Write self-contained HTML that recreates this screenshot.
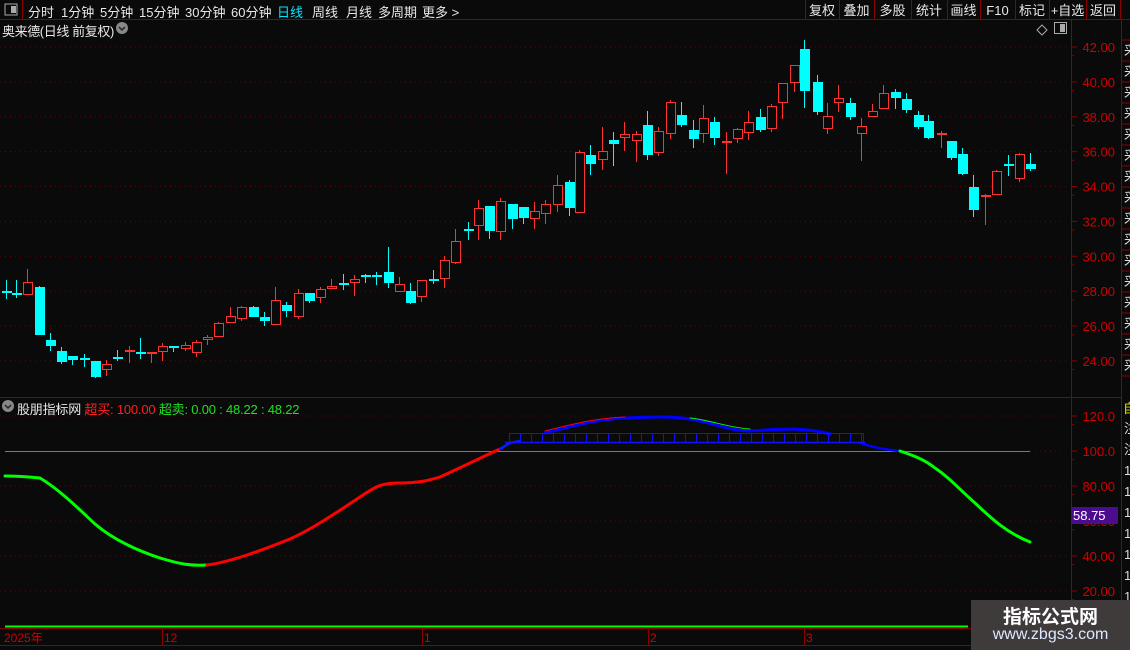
<!DOCTYPE html>
<html><head><meta charset="utf-8"><style>
html,body{margin:0;padding:0;background:#0a0a0a;width:1130px;height:650px;overflow:hidden}
body{font-family:"Liberation Sans","Noto Sans CJK SC",sans-serif;position:relative}
.t{position:absolute;white-space:nowrap;font-size:13px}
</style></head><body>
<svg id="s" width="1130" height="650" style="position:absolute;left:0;top:0" xmlns="http://www.w3.org/2000/svg" font-family="Liberation Sans, Noto Sans CJK SC, sans-serif"></svg>
<div class="t" style="left:28px;top:2px;color:#e8e8e8">分时</div>
<div class="t" style="left:61px;top:2px;color:#e8e8e8">1分钟</div>
<div class="t" style="left:100px;top:2px;color:#e8e8e8">5分钟</div>
<div class="t" style="left:139px;top:2px;color:#e8e8e8">15分钟</div>
<div class="t" style="left:185px;top:2px;color:#e8e8e8">30分钟</div>
<div class="t" style="left:231px;top:2px;color:#e8e8e8">60分钟</div>
<div class="t" style="left:277px;top:2px;color:#00e5ff">日线</div>
<div class="t" style="left:312px;top:2px;color:#e8e8e8">周线</div>
<div class="t" style="left:346px;top:2px;color:#e8e8e8">月线</div>
<div class="t" style="left:378px;top:2px;color:#e8e8e8">多周期</div>
<div class="t" style="left:422px;top:2px;color:#e8e8e8">更多 &gt;</div>
<div class="t" style="left:2px;top:21px;color:#e8e8e8;letter-spacing:-0.4px">奥来德(日线 前复权)</div>
<div class="t" style="left:17px;top:399px;color:#e8e8e8;letter-spacing:-0.2px">股朋指标网 <span style="color:#ff2020">超买: 100.00</span> <span style="color:#20e020">超卖: 0.00 : 48.22 : 48.22</span></div>
<div style="position:absolute;left:971px;top:600px;width:159px;height:50px;background:#3f3b3b"></div>
<div class="t" style="left:971px;top:602px;width:159px;text-align:center;color:#fff;font-size:19px;font-weight:bold">指标公式网</div>
<div class="t" style="left:971px;top:626px;width:159px;text-align:center;color:#dfe8ff;font-size:16px">www.zbgs3.com</div>
<script>
var s=document.getElementById('s'),h='';
function L(x1,y1,x2,y2,c,w,d){h+='<line x1="'+x1+'" y1="'+y1+'" x2="'+x2+'" y2="'+y2+'" stroke="'+c+'" stroke-width="'+(w||1)+'"'+(d?' stroke-dasharray="'+d+'"':'')+'/>';}
function R(x,y,w,hh,f,st){h+='<rect x="'+x+'" y="'+y+'" width="'+w+'" height="'+hh+'" fill="'+f+'"'+(st?' stroke="'+st+'"':'')+'/>';}
function T(x,y,t,c,sz,a){h+='<text x="'+x+'" y="'+y+'" fill="'+c+'" font-size="'+(sz||13)+'"'+(a?' text-anchor="'+a+'"':'')+'>'+t+'</text>';}
var D='#8b0000';
L(0,19.5,1130,19.5,D);L(22.5,0,22.5,19,D);
R(5,4,12,11,'none','#aaa');R(11,6,5,7,'#aaa');
var bx=[805,839,874,911,947,980,1015,1049,1086,1120],bt=['复权','叠加','多股','统计','画线','F10','标记','+自选','返回'];
for(var i=0;i<bx.length;i++)L(bx[i]+.5,0,bx[i]+.5,19,D);
for(i=0;i<9;i++)T((bx[i]+bx[i+1])/2,15,bt[i],'#e8e8e8',13,'middle');
h+='<circle cx="122" cy="28" r="6" fill="#888"/><path d="M119 27l3 3 3-3" stroke="#222" stroke-width="1.5" fill="none"/>';
h+='<circle cx="8" cy="406" r="6" fill="#888"/><path d="M5 405l3 3 3-3" stroke="#222" stroke-width="1.5" fill="none"/>';
h+='<path d="M1042 25l5 5-5 5-5-5z" stroke="#aaa" fill="none"/>';R(1054.5,22.5,12,11,'none','#aaa');R(1060,24,5,8,'#aaa');
L(1071.5,20,1071.5,650,D);L(1121.5,20,1121.5,650,D);
L(0,397.5,1121,397.5,D);L(0,628.5,1121,628.5,D);L(0,645.5,1121,645.5,D);
var pl=[42,40,38,36,34,32,30,28,26,24];
for(i=0;i<pl.length;i++){var y=47+(42-pl[i])*17.44;L(0,y,1068,y,'#6a0000',1,'1 4');L(1071,y,1077,y,D);L(1071,y+8.7,1074,y+8.7,D);T(1115,y+5,pl[i].toFixed(2),'#d00000',13,'end');}
var il=[120,100,80,60,40,20];
for(i=0;i<il.length;i++){var y=451+(100-il[i])*1.75;if(il[i]!=100)L(0,y,1068,y,'#6a0000',1,'1 4');else L(1030,y,1068,y,'#6a0000',1,'1 4');L(1071,y,1077,y,D);L(1071,y+8.7,1074,y+8.7,D);T(1115,y+5,il[i]<100?il[i].toFixed(2):il[i].toFixed(1),'#d00000',13,'end');}
for(i=0;i<17;i++){L(1122,40+i*21,1130,40+i*21,D);}
for(i=0;i<16;i++)T(1124,55+i*21,'采','#ddd',13);
T(1123,413,'自','#dd0',13);for(i=0;i<9;i++)T(1124,433+i*21,i<2?'注':'1','#ddd',13);
var C=[[5.5,291,293,280,299,'c'],[16,294,294,280,298,'c'],[27,282,295,269,295,'r'],[39,287,335,286,335,'c'],[50,340,346,333,351,'c'],[61,351,362,347,364,'c'],[72,356,360,356,365,'c'],[84,359,360,354,367,'c'],[95,361,377,361,378,'c'],[106,364,370,360,376,'r'],[117,358,358,350,361,'c'],[129,351,351,346,363,'r'],[140,353,353,338,359,'c'],[151,353,353,353,363,'r'],[162,346,352,343,361,'r'],[173,347,347,347,352,'c'],[185,345,349,342,351,'r'],[196,342,353,340,357,'r'],[207,337,340,335,345,'r'],[218,323,337,322,337,'r'],[230,316,323,307,323,'r'],[241,307,319,306,321,'r'],[253,307,317,306,317,'c'],[264,317,321,312,326,'c'],[275,300,325,287,325,'r'],[286,305,311,302,317,'c'],[298,293,317,289,319,'r'],[309,293,301,293,303,'c'],[320,289,298,287,303,'r'],[331,286,289,279,289,'r'],[343,284,284,274,290,'c'],[354,279,283,275,296,'r'],[365,276,276,274,283,'c'],[376,275,277,272,285,'c'],[388,272,283,247,288,'c'],[399,284,292,277,292,'r'],[410,291,303,283,304,'c'],[421,280,297,280,302,'r'],[433,280,280,270,284,'c'],[444,260,279,256,288,'r'],[455,241,263,229,264,'r'],
[467.6,230,230,222,240,'c'],[478,208,226,200,240,'r'],[489,206,231,206,239,'c'],[500,201,232,198,240,'r'],[512,204,219,204,229,'c'],[523,207,218,207,224,'c'],[534,211,219,202,229,'r'],[545,204,214,200,224,'r'],[557,185,205,175,212,'r'],[569,182,208,180,216,'c'],[579,152,213,150,213,'r'],[590,155,164,145,175,'c'],[602,151,160,127,170,'r'],[613,140,144,132,166,'c'],[624,134,138,122,151,'r'],[636,134,141,131,162,'r'],[647,125,155,111,160,'c'],[658,131,153,127,156,'r'],[670,102,134,100,139,'r'],[681,115,125,102,127,'c'],[693,130,139,120,148,'c'],[703,118,134,105,143,'r'],[714,122,138,117,145,'c'],[726,142,142,132,174,'r'],[737,129,139,128,143,'r'],[748,122,133,111,140,'r'],[760,117,130,109,132,'c'],[771,106,129,104,132,'r'],[782,83,103,83,119,'r'],[794,65,83,65,92,'r'],[804,49,91,40,108,'c'],[817,82,112,75,115,'c'],[827,116,129,103,134,'r'],[838,98,103,85,112,'r'],[850,103,117,98,120,'c'],[861,126,134,118,161,'r'],[872,111,117,104,117,'r'],[883,93,109,85,109,'r'],[895,92,98,89,109,'c'],[906,99,110,93,113,'c'],[918,115,127,111,129,'c'],[928,121,138,115,139,'c'],[941,134,134,131,148,'r'],[951,141,158,141,160,'c'],[962,154,174,148,175,'c'],[973,187,210,175,217,'c'],[985,195,197,194,225,'r'],[996,171,195,170,195,'r'],[1008,165,165,155,176,'c'],[1019,154,179,153,182,'r'],[1030,164,169,153,171,'c']];
for(i=0;i<C.length;i++){var c=C[i],x=Math.round(c[0]),col=c[5]=='c'?'#00ffff':'#ff3232';
L(x+.5,c[3],x+.5,c[4],col);var t=Math.min(c[1],c[2]),b=Math.max(c[1],c[2]);
if(b-t<2){R(x-4,t-1,10,2,col);}else if(c[5]=='c')R(x-4,t,10,b-t,col);else R(x-3.5,t+.5,9,b-t-1,'#0a0a0a',col);}
L(5,451.5,1030,451.5,'#9a6a6a');
function P(pts,col,w){h+='<path d="'+pts+'" fill="none" stroke="'+col+'" stroke-width="'+(w||3)+'" stroke-linejoin="round" stroke-linecap="round"/>';}
P('M5,476 C20,476 30,477 40,478 C60,490 80,510 95,524 C110,537 130,548 160,558 C180,564 190,566 207,565','#00ff00');
P('M207,565 C230,562 260,551 290,539 C310,530 330,517 360,497 C375,487 380,483 400,483 C420,483 430,480 440,477 C460,468 480,458 500,449','#ff0000');
P('M500,449 L510,443 L520,441','#0020ff',2.5);
P('M545,433 C580,424 600,419 625,418 C650,417 670,416 690,419 C710,422 730,431 750,431 C770,430 800,426 830,434','#0000ff',3);
P('M545,431 C580,422 600,418 625,417','#ff0000',1);P('M690,418 C710,420 730,428 750,429','#00ff00',1);
P('M860,443 C875,448 888,450 900,451','#0000ff',2.5);
P('M900,451 C915,456 925,460 935,468 C950,478 960,490 975,503 C990,517 1005,532 1030,542','#00ff00');
R(509.5,433.5,354,9,'none','#1010ff');for(var x=509.5;x<863;x+=11)L(x,433,x,442,'#1010ff');
L(505,442.5,865,442.5,'#1010ff',1.5);
L(5,626.5,968,626.5,'#00ff00',2);
R(1071,507,47,17,'#4b0c8f');T(1073,520,'58.75','#fff',13);
T(4,642,'2025年','#d00000',12);L(162.5,629,162.5,645,D);T(164,642,'12','#d00000',12);
L(422.5,629,422.5,645,D);T(424,642,'1','#d00000',12);L(648.5,629,648.5,645,D);T(650,642,'2','#d00000',12);L(804.5,629,804.5,645,D);T(806,642,'3','#d00000',12);
s.innerHTML=h;
</script>
</body></html>
